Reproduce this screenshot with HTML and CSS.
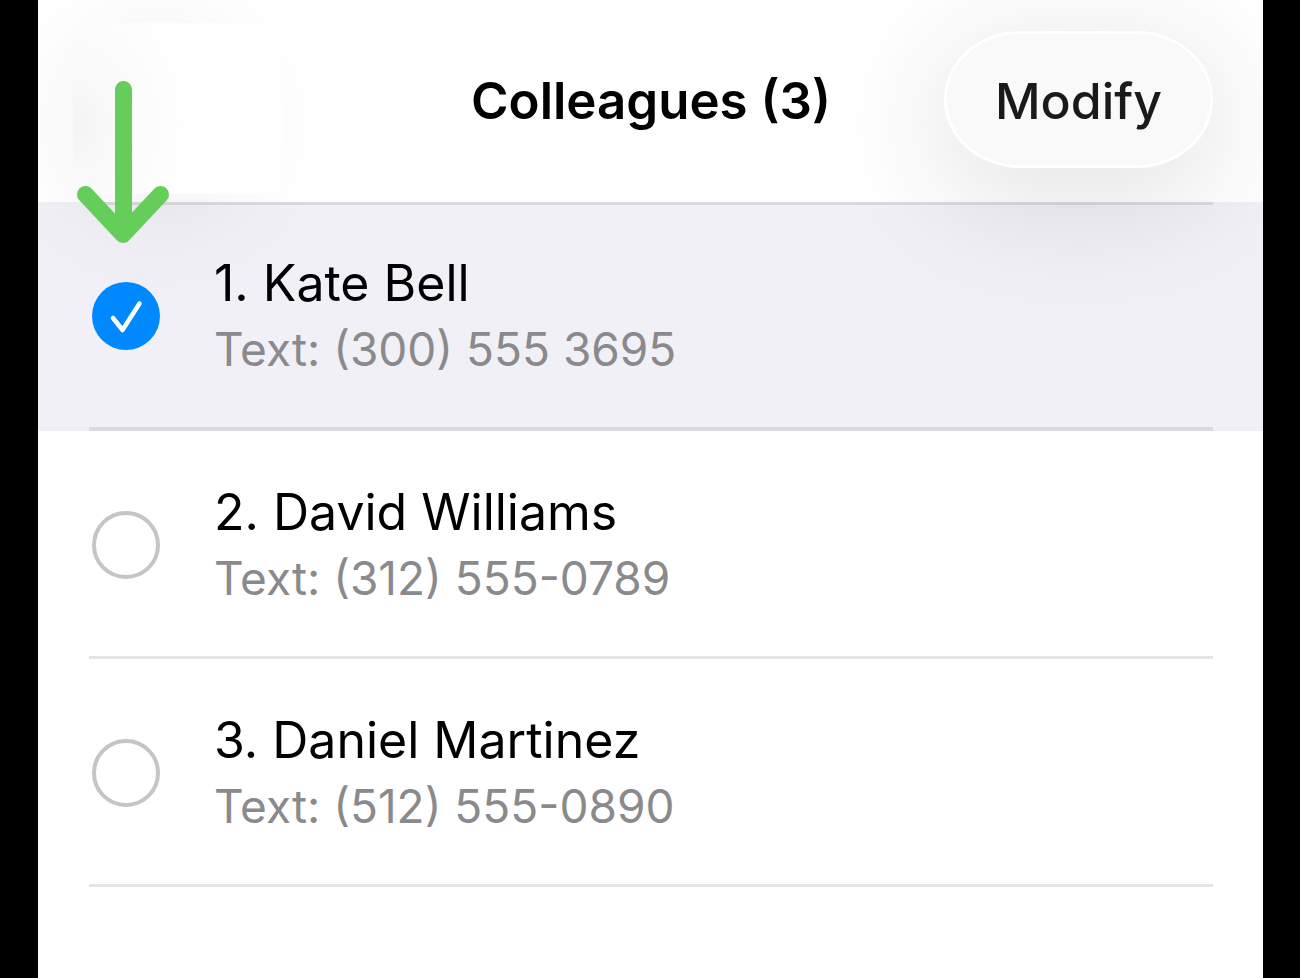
FILE: index.html
```html
<!DOCTYPE html>
<html lang="en">
<head>
<meta charset="utf-8">
<meta name="viewport" content="width=device-width, initial-scale=1">
<title>Colleagues</title>
<link rel="stylesheet" href="styles.css">
</head>
<body>
<main class="screen">
  <header class="bar">
    <div class="slot"></div>
    <div class="cover"></div>
    <h1 class="title">Colleagues (3)</h1>
    <button class="modify" type="button">Modify</button>
    <svg class="arrow" viewBox="0 0 92 162" aria-hidden="true">
      <path d="M46.500 8.500V150M8.500 113.500L46 153.500L83.500 113.500" fill="none" stroke="#65ce5a" stroke-width="17" stroke-linecap="round" stroke-linejoin="round"/>
      <path d="M38 128V150H55V128Z" fill="#65ce5a"/>
    </svg>
  </header>
  <ul class="list">
    <li class="row row-selected">
      <label class="entry">
        <span class="tick">
          <input class="box" type="checkbox" checked>
          <svg class="mark" viewBox="0 0 68 68" aria-hidden="true"><path d="M21 36L30.500 48L47.500 21.500" fill="none" stroke="#fff" stroke-width="4.500" stroke-linecap="round" stroke-linejoin="round"/></svg>
        </span>
        <span class="who">
          <span class="name">1. Kate Bell</span>
          <span class="phone">Text: (300) 555 3695</span>
        </span>
      </label>
    </li>
    <li class="row">
      <label class="entry">
        <span class="tick"><input class="box" type="checkbox"></span>
        <span class="who">
          <span class="name">2. David Williams</span>
          <span class="phone">Text: (312) 555-0789</span>
        </span>
      </label>
    </li>
    <li class="row">
      <label class="entry">
        <span class="tick"><input class="box" type="checkbox"></span>
        <span class="who">
          <span class="name">3. Daniel Martinez</span>
          <span class="phone">Text: (512) 555-0890</span>
        </span>
      </label>
    </li>
  </ul>
</main>
</body>
</html>
```
FILE: styles.css
```css
* { box-sizing: border-box; }

body {
  margin: 0;
  padding: 0 37px 0 38px;
  background: #000;
  font-family: Inter, "Liberation Sans", sans-serif;
  color: #000;
}

.screen {
  min-height: 100vh;
  background: #fff;
  overflow: hidden;
}

.bar {
  position: relative;
  z-index: 1;
  display: grid;
  grid-template-columns: 1fr auto 1fr;
  align-items: center;
  padding: 31px 50px 34px 51px;
}

.slot {
  width: 137px;
  height: 137px;
  border-radius: 50%;
  box-shadow: 0 24px 120px 12px rgba(0, 0, 0, 0.09);
}

.cover {
  position: absolute;
  left: 36px;
  top: 23px;
  width: 210px;
  height: 171px;
  background: radial-gradient(ellipse 106px 140px at 0 60%, #f4f4f4, #fafafa 45%, #fefefe);
}

.title {
  position: relative;
  margin: 0;
  padding-top: 2px;
  font-size: 51px;
  line-height: 66px;
  font-weight: 600;
}

.modify {
  justify-self: end;
  height: 137px;
  padding: 2px 48px 0;
  border: 3px solid #fff;
  border-radius: 76px / 68px;
  background: #f9f9f9;
  box-shadow: 0 24px 120px 12px rgba(0, 0, 0, 0.11);
  font-family: inherit;
  font-size: 50px;
  line-height: 66px;
  font-weight: 500;
  color: #1a1a1a;
}

.arrow {
  position: absolute;
  left: 39px;
  top: 81px;
  width: 92px;
  height: 162px;
}

.list {
  margin: 0;
  padding: 0;
  list-style: none;
}

.row {
  padding: 0 50px 0 51px;
}

.row-selected { background: #f1f0f6; }

.entry {
  display: flex;
  align-items: center;
  gap: 54px;
  padding: 48px 0 45px 3px;
  border-bottom: 3px solid #e5e5e5;
}

.row-selected .entry {
  padding: 45px 0 45px 3px;
  border-top: 3px solid #dadae0;
  border-bottom: 4px solid #dadae0;
}

.tick {
  position: relative;
  width: 68px;
  height: 68px;
}

.box {
  appearance: none;
  display: block;
  width: 68px;
  height: 68px;
  margin: 0;
  border: 4px solid #c5c5c7;
  border-radius: 50%;
}

.box:checked {
  border: 0;
  background: #0088ff;
}

.mark {
  position: absolute;
  inset: 0;
  pointer-events: none;
}

.name,
.phone {
  display: block;
  line-height: 66px;
}

.name { font-size: 50px; }

.phone {
  font-size: 46px;
  color: #8a8a8d;
}
```
